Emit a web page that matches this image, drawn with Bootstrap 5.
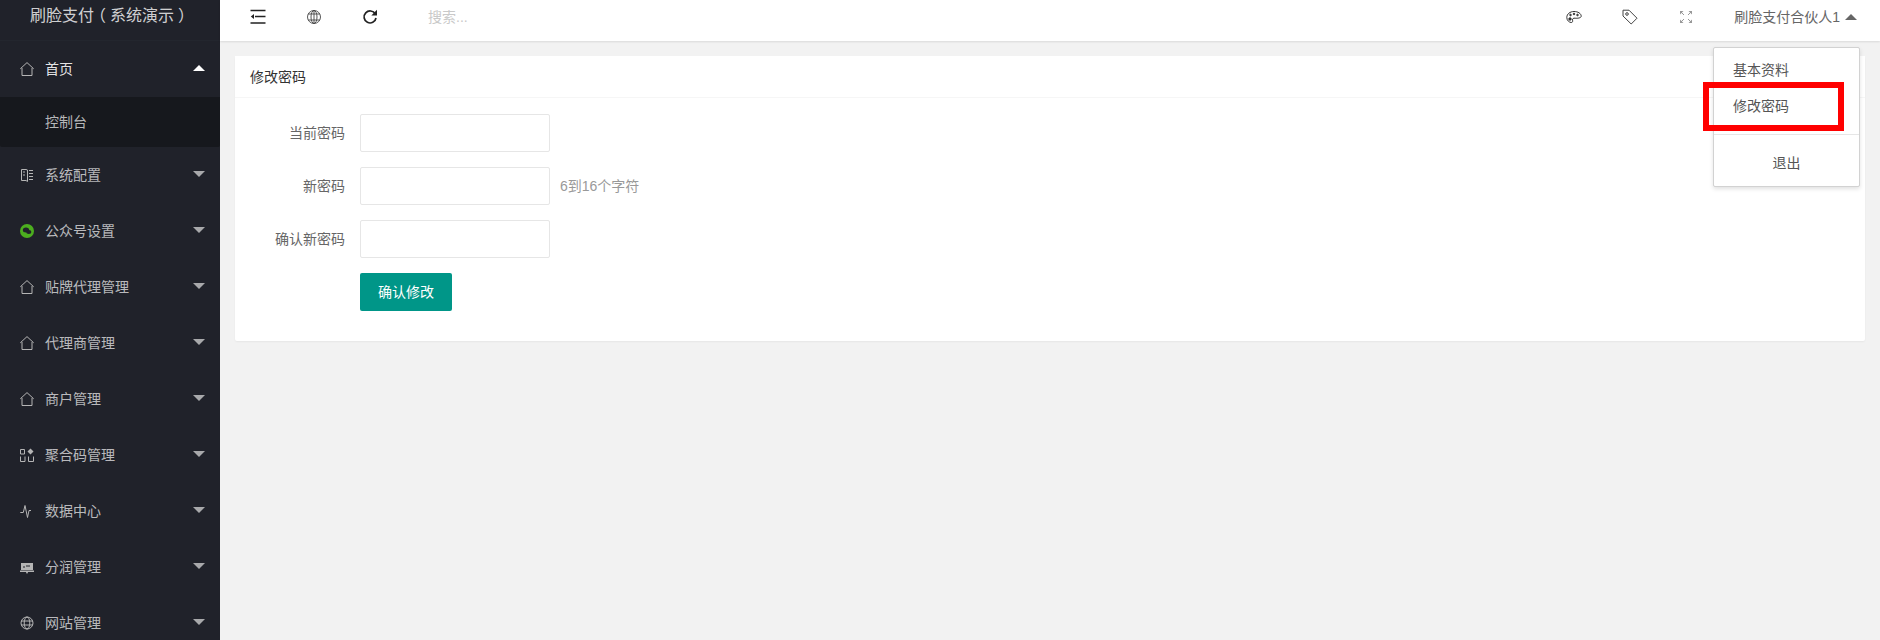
<!DOCTYPE html>
<html lang="zh-CN">
<head>
<meta charset="utf-8">
<title>修改密码</title>
<link rel="stylesheet" href="https://cdn.jsdelivr.net/npm/bootstrap@5.3.0/dist/css/bootstrap.min.css">
<style>
html,body{height:640px;overflow:hidden}
body{background:#f2f2f2;color:#666;font-family:"Liberation Sans","Noto Sans CJK SC",sans-serif;font-size:14px}
.shell{height:640px}
.side{width:220px;background:#20222a;flex:none;overflow:hidden}
.brand{height:41px;flex:none;padding-bottom:9px;font-size:16px;color:rgba(255,255,255,.8);border-bottom:1px solid #23262e}
.par{display:inline-block;width:16px;text-align:center;font-feature-settings:"halt"}
.mitem{height:56px;flex:none;padding:0 15px 0 20px;color:rgba(255,255,255,.7);text-decoration:none}
.mitem.on{color:rgba(255,255,255,.9)}
.mico{width:14px;height:14px;margin-right:11px;flex:none;color:#b5b5b5}
.tri{width:0;height:0;border-left:6px solid transparent;border-right:6px solid transparent;border-top:6px solid #a8a9ab;margin-top:-2px}
.tri.up{border-top:0;border-bottom:6px solid #fff}
.sub{height:50px;flex:none;padding-left:45px;background:#16181d;color:rgba(255,255,255,.7);text-decoration:none;border-radius:0 0 2px 2px}
.top{height:41px;flex:none;padding-bottom:7px;background:#fff;box-shadow:0 1px 2px rgba(0,0,0,.1);position:relative}
.tbtn{width:56px;color:#333}
.tico{width:16px;height:16px}
.lead-btn{margin-left:10px}
.search{margin-left:30px;color:#c9c9c9}
.who{color:#666;margin-left:20px;margin-right:23px}
.tri.dark{border-bottom-color:#666;margin:0 0 0 5px}
.pane{padding:15px}
.pcard{border:0;border-radius:2px;box-shadow:0 1px 2px rgba(0,0,0,.05);height:285px}
.phead{height:42px;padding:1px 15px 0;color:#333;background:#fff;border-bottom:1px solid #f6f6f6}
.pbody{padding:16px 0 0}
.frow{margin-bottom:15px;height:38px}
.flabel{width:125px;padding-right:15px;text-align:right;color:#666;flex:none}
.finput{width:190px;height:38px;border:1px solid #e6e6e6;border-radius:2px;flex:none}
.fhelp{margin-left:10px;color:#999}
.fbtn{margin-left:125px;width:92px;height:38px;padding:0;background:#009688;border:0;border-radius:2px;color:#fff;font-size:14px}
.umenu{display:block;position:absolute;left:1713px;top:47px;width:147px;min-width:0;height:140px;margin:0;padding:0;border:1px solid #d2d2d2;border-radius:2px;box-shadow:0 2px 4px rgba(0,0,0,.12);font-size:14px}
.umenu a{display:block;color:#555;text-decoration:none;line-height:36px;padding:0 19px}
.ulist{padding-top:4px}
.usep{border-top:1px solid #e6e6e6;margin-top:10px;padding-top:10px}
.usep a{padding:0;text-align:center;line-height:36px}
.redbox{position:absolute;z-index:1001;left:1703px;top:82px;width:141px;height:49px;border:6px solid #f00}
</style>
</head>
<body>
<div class="shell d-flex position-relative">
  <aside class="side d-flex flex-column">
    <div class="brand d-flex align-items-center justify-content-center"><span>刷脸支付<span class="par">（</span>系统演示<span class="par">）</span></span></div>
    <a class="mitem on d-flex align-items-center" href="#">
      <svg class="mico" viewBox="0 0 14 14" fill="none" stroke="currentColor"><path d="M.3 6.800 7 .6l6.700 6.200M2 6v7.500h10V6"/></svg>
      <span class="flex-grow-1">首页</span><i class="tri up"></i></a>
    <a class="sub d-flex align-items-center" href="#">控制台</a>
    <a class="mitem d-flex align-items-center" href="#">
      <svg class="mico" viewBox="0 0 14 14" fill="none" stroke="currentColor"><path d="M1.500 2v10.500H6l1.500 1V2L6 1.500H1.500ZM9 2.500h4M9 5.500h4M9 8.500h4M9 11.500h4M3 4h2M3 7h2"/></svg>
      <span class="flex-grow-1">系统配置</span><i class="tri"></i></a>
    <a class="mitem d-flex align-items-center" href="#">
      <svg class="mico" viewBox="0 0 14 14"><circle cx="7" cy="7" r="7" fill="#4cae1f"/><ellipse cx="6" cy="6" rx="3.200" ry="2.500" fill="#20222a"/><ellipse cx="8.800" cy="8" rx="2.600" ry="2" fill="#20222a"/></svg>
      <span class="flex-grow-1">公众号设置</span><i class="tri"></i></a>
    <a class="mitem d-flex align-items-center" href="#">
      <svg class="mico" viewBox="0 0 14 14" fill="none" stroke="currentColor"><path d="M.3 6.800 7 .6l6.700 6.200M2 6v7.500h10V6"/></svg>
      <span class="flex-grow-1">贴牌代理管理</span><i class="tri"></i></a>
    <a class="mitem d-flex align-items-center" href="#">
      <svg class="mico" viewBox="0 0 14 14" fill="none" stroke="currentColor"><path d="M.3 6.800 7 .6l6.700 6.200M2 6v7.500h10V6"/></svg>
      <span class="flex-grow-1">代理商管理</span><i class="tri"></i></a>
    <a class="mitem d-flex align-items-center" href="#">
      <svg class="mico" viewBox="0 0 14 14" fill="none" stroke="currentColor"><path d="M.3 6.800 7 .6l6.700 6.200M2 6v7.500h10V6"/></svg>
      <span class="flex-grow-1">商户管理</span><i class="tri"></i></a>
    <a class="mitem d-flex align-items-center" href="#">
      <svg class="mico" viewBox="0 0 14 14" fill="none" stroke="currentColor"><path d="M.5 1.500h4v4.500h-4zM.5 8.500v5h4.500v-5M8.500 8.500v5h5v-5"/><path d="m10.500.5 3 3-3 3-3-3z" fill="currentColor" stroke="none"/></svg>
      <span class="flex-grow-1">聚合码管理</span><i class="tri"></i></a>
    <a class="mitem d-flex align-items-center" href="#">
      <svg class="mico" viewBox="0 0 14 14" fill="none" stroke="currentColor"><path d="M.3 8.500h3l1.700-7 2.500 12 1.500-7H11"/></svg>
      <span class="flex-grow-1">数据中心</span><i class="tri"></i></a>
    <a class="mitem d-flex align-items-center" href="#">
      <svg class="mico" viewBox="0 0 14 14"><path fill="currentColor" d="M1 3h12v7H1zM0 10.500h14V12H8l-.5 1.500h-1L6 12H0z"/><path stroke="#20222a" d="M3 7h2M6 6h4"/></svg>
      <span class="flex-grow-1">分润管理</span><i class="tri"></i></a>
    <a class="mitem d-flex align-items-center" href="#">
      <svg class="mico" viewBox="0 0 14 14" fill="none" stroke="currentColor"><circle cx="7" cy="7" r="6"/><ellipse cx="7" cy="7" rx="2.800" ry="6"/><path d="M1 5h12M1 9h12"/></svg>
      <span class="flex-grow-1">网站管理</span><i class="tri"></i></a>
  </aside>
  <main class="flex-grow-1 d-flex flex-column">
    <header class="top d-flex align-items-center">
      <div class="tbtn lead-btn d-flex justify-content-center">
        <svg class="tico" viewBox="0 0 16 16" fill="none" stroke="#222" stroke-width="1.300"><path d="M.5 1.500h15M5 7.500h10.500M.5 14h15"/><path d="M4 5v5L.8 7.500z" fill="#222" stroke="none"/></svg>
      </div>
      <div class="tbtn d-flex justify-content-center">
        <svg class="tico" viewBox="0 0 16 16" fill="none" stroke="#444" stroke-width=".9"><circle cx="8" cy="8" r="6.500"/><ellipse cx="8" cy="8" rx="3" ry="6.500"/><path d="M2 5h12M2 11h12M8 1.500v13"/></svg>
      </div>
      <div class="tbtn d-flex justify-content-center">
        <svg class="tico" viewBox="0 0 16 16" fill="none" stroke="#222" stroke-width="1.700"><path d="M13.300 5A6 6 0 1 0 14 9"/><path d="M15 .8V6.500H9.300z" fill="#222" stroke="none"/></svg>
      </div>
      <div class="search flex-grow-1">搜索...</div>
      <div class="tbtn d-flex justify-content-center">
        <svg class="tico" viewBox="0 0 16 16" fill="none" stroke="#333"><path d="M8 2.500C4 2.500.8 5 .8 8.500c0 3 2.500 5 4.500 5 1.500 0 1.500-1.500 1.200-2.500-.3-1.300 1-2 2.500-1.800 2 .2 6.200 0 6.200-2C15.200 4.500 12 2.500 8 2.500Z"/><circle cx="4" cy="10" r="1.200" fill="#333"/><circle cx="4.500" cy="6" r=".8" fill="#333"/><circle cx="8" cy="5" r=".8" fill="#333"/><circle cx="11.500" cy="6" r=".8" fill="#333"/></svg>
      </div>
      <div class="tbtn d-flex justify-content-center">
        <svg class="tico" viewBox="0 0 16 16" fill="none" stroke="#444"><path d="M1 1.200h6l8 8-5.800 5.800-8.200-8z"/><circle cx="5" cy="5" r="1.300"/></svg>
      </div>
      <div class="tbtn d-flex justify-content-center">
        <svg class="tico" viewBox="0 0 16 16" fill="none" stroke="#999"><path d="M3 3l3 3M13 3l-3 3M3 13l3-3M13 13l-3-3"/><path d="M2 2h3.500L2 5.500zM14 2v3.500L10.500 2zM2 14v-3.500L5.500 14zM14 14h-3.500l3.500-3.500z" fill="#999" stroke="none"/></svg>
      </div>
      <div class="who d-flex align-items-center">刷脸支付合伙人1<i class="tri up dark"></i></div>
    </header>
    <section class="pane">
      <div class="card pcard">
        <div class="phead d-flex align-items-center">修改密码</div>
        <form class="pbody">
          <div class="frow d-flex align-items-center"><label class="flabel">当前密码</label><input class="finput" type="password" aria-label="当前密码"></div>
          <div class="frow d-flex align-items-center"><label class="flabel">新密码</label><input class="finput" type="password" aria-label="新密码"><span class="fhelp">6到16个字符</span></div>
          <div class="frow d-flex align-items-center"><label class="flabel">确认新密码</label><input class="finput" type="password" aria-label="确认新密码"></div>
          <button class="btn fbtn" type="button">确认修改</button>
        </form>
      </div>
    </section>
  </main>
  <div class="dropdown-menu show umenu">
    <div class="ulist"><a href="#">基本资料</a><a href="#">修改密码</a></div>
    <div class="usep"><a href="#">退出</a></div>
  </div>
  <div class="redbox"></div>
</div>
<script src="https://cdn.jsdelivr.net/npm/bootstrap@5.3.0/dist/js/bootstrap.bundle.min.js"></script>
</body>
</html>
